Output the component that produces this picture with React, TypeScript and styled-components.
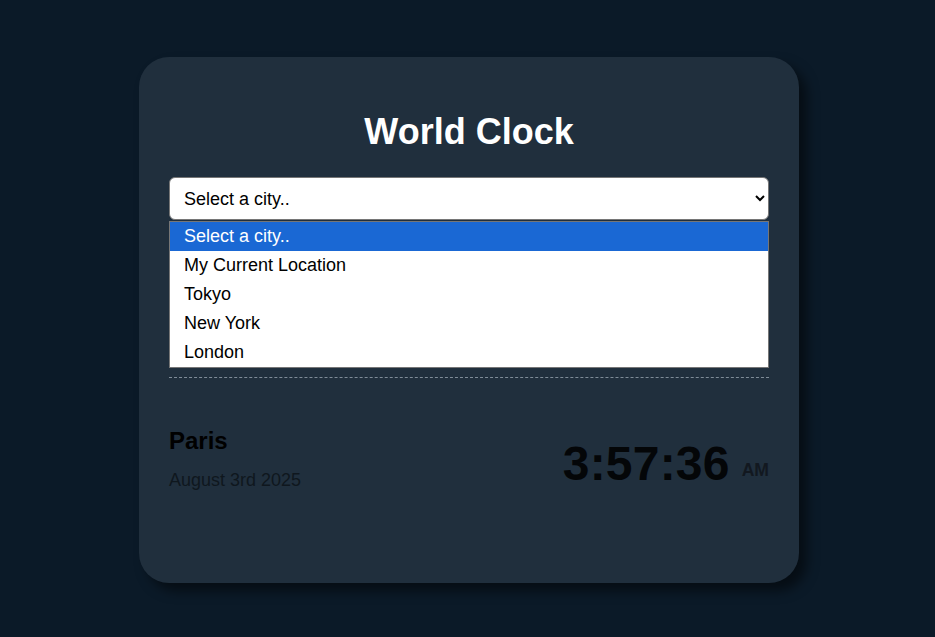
import React from "react";
import styled, { createGlobalStyle } from "styled-components";

const GlobalStyle = createGlobalStyle`
  html, body {
    margin: 0;
    padding: 0;
    background: #0b1a28;
    font-family: "Liberation Sans", Arial, sans-serif;
  }
  * { box-sizing: border-box; }
`;

const Page = styled.div`
  min-height: 637px;
  padding: 57px 0 0 139px;
`;

const Card = styled.main`
  width: 660px;
  height: 526px;
  padding: 54px 30px 0;
  background: #202f3d;
  border-radius: 30px;
  box-shadow: 8px 8px 12px rgba(0, 0, 0, 0.5);
`;

const Title = styled.h1`
  margin: 0 0 24px;
  font-size: 36px;
  line-height: 42px;
  font-weight: 700;
  color: #ffffff;
  text-align: center;
`;

const SelectWrap = styled.div`
  position: relative;
`;

const CitySelect = styled.select`
  display: block;
  width: 100%;
  height: 43px;
  padding: 0 4px 0 10px;
  font-family: "Liberation Sans", Arial, sans-serif;
  font-size: 18px;
  color: #000;
  background: #fff;
  border: 1px solid #767676;
  border-radius: 6px;
`;

const Listbox = styled.ul`
  position: absolute;
  left: 0;
  right: 0;
  top: calc(100% + 1px);
  margin: 0;
  padding: 0;
  list-style: none;
  background: #fff;
  border: 1px solid #767676;
  z-index: 2;
`;

const Option = styled.li<{ $active?: boolean }>`
  height: 29px;
  line-height: 29px;
  padding-left: 14px;
  font-size: 18px;
  color: ${(p) => (p.$active ? "#fff" : "#000")};
  background: ${(p) => (p.$active ? "#1a68d4" : "transparent")};
`;

const CityList = styled.section`
  margin-top: 157px;
  border-top: 1px dashed #7f8c98;
`;

const CityRow = styled.div`
  display: flex;
  justify-content: space-between;
  align-items: flex-end;
  padding-top: 49px;
`;

const CityInfo = styled.div``;

const CityName = styled.h2`
  margin: 0;
  font-size: 24px;
  line-height: 28px;
  font-weight: 700;
  color: #000;
`;

const CityDate = styled.div`
  margin-top: 15px;
  font-size: 18px;
  line-height: 21px;
  color: #0f171e;
`;

const Time = styled.div`
  font-size: 48px;
  line-height: 55px;
  font-weight: 700;
  color: #040608;
  letter-spacing: 0.2px;
`;

const Meridiem = styled.small`
  display: inline-block;
  margin-left: 12px;
  font-size: 17.6px;
  font-weight: 700;
  color: #121820;
  vertical-align: 4px;
  line-height: 1;
  letter-spacing: 0;
`;

const options = ["Select a city..", "My Current Location", "Tokyo", "New York", "London"];

export default function App() {
  return (
    <>
      <GlobalStyle />
      <Page>
        <Card>
          <Title>World Clock</Title>
          <SelectWrap>
            <CitySelect value="" onChange={() => {}}>
              {options.map((o, i) => (
                <option key={o} value={i === 0 ? "" : o}>
                  {o}
                </option>
              ))}
            </CitySelect>
            <Listbox role="listbox">
              {options.map((o, i) => (
                <Option key={o} $active={i === 0} role="option">
                  {o}
                </Option>
              ))}
            </Listbox>
          </SelectWrap>
          <CityList>
            <CityRow>
              <CityInfo>
                <CityName>Paris</CityName>
                <CityDate>August 3rd 2025</CityDate>
              </CityInfo>
              <Time>
                3:57:36<Meridiem>AM</Meridiem>
              </Time>
            </CityRow>
          </CityList>
        </Card>
      </Page>
    </>
  );
}
